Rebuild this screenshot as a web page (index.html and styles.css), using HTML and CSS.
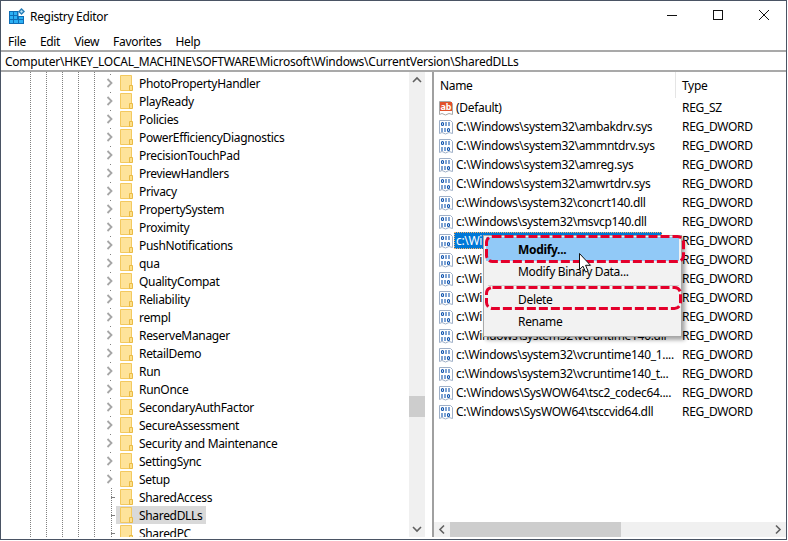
FILE: index.html
```html
<!DOCTYPE html>
<html lang="en">
<head>
<meta charset="utf-8">
<title>Registry Editor</title>
<link rel="stylesheet" href="styles.css">
</head>
<body>
<svg class="defs" width="0" height="0" aria-hidden="true">
  <symbol id="folder" viewBox="0 0 13 16">
    <path d="M.5.5H11.5V15.5H.5Z" fill="#fee39a" stroke="#f3c95f"/>
    <path d="M9.5 10.5H12.5V15.5H9.5Z" fill="#fde08a" stroke="#e9ba45"/>
  </symbol>
  <symbol id="chev" viewBox="0 0 8 10">
    <path d="M1.5 1L5.5 5 1.5 9" fill="none" stroke="#a6a6a6" stroke-width="1.8"/>
  </symbol>
  <symbol id="bin" viewBox="0 0 16 16">
    <path d="M1.5 1.5H12.5L14.5 3.5V14.5L11 13.5 7.5 15 4 13.5 1.5 14.5Z" fill="#fff" stroke="#9fb0c8"/>
    <g fill="none" stroke="#1458b0" stroke-width="1.1">
      <rect x="3.5" y="3.5" width="2" height="3" rx="1"/><path d="M8 3V7M11 3V7"/>
      <path d="M4 9V13M7 9V13"/><rect x="9.5" y="9.5" width="2" height="3" rx="1"/>
    </g>
  </symbol>
</svg>
<div class="window">
  <header class="titlebar">
    <svg class="appicon" width="16" height="16" viewBox="0 0 16 16" aria-hidden="true">
      <path d="M0 3H9.5V8H15V16H0Z" fill="#0f6db5"/>
      <g fill="#2cb0f4">
        <rect x="1" y="4" width="3" height="3"/><rect x="5" y="4" width="3" height="3"/>
        <rect x="1" y="8" width="3" height="3"/><rect x="5" y="8" width="3" height="3"/><rect x="10" y="9" width="4" height="2"/>
        <rect x="1" y="12" width="3" height="3"/><rect x="5" y="12" width="4" height="3"/><rect x="10" y="12" width="4" height="3"/>
      </g>
      <path d="M12.5 0L16 3.5 12.5 7 9 3.5Z" fill="#2a7fb8"/>
      <path d="M12.5 2L14 3.5 12.5 5 11 3.5Z" fill="#bfe3f7"/>
    </svg>
    <span class="title">Registry Editor</span>
    <div class="controls">
      <svg width="46" height="30" viewBox="0 0 46 30" aria-hidden="true"><path d="M18 14.5H28" stroke="#111"/></svg>
      <svg width="46" height="30" viewBox="0 0 46 30" aria-hidden="true"><rect x="18.5" y="9.5" width="9" height="9" fill="none" stroke="#111"/></svg>
      <svg width="46" height="30" viewBox="0 0 46 30" aria-hidden="true"><path d="M18 9L28 19M28 9L18 19" stroke="#111" fill="none"/></svg>
    </div>
  </header>
  <nav class="menubar"><span>File</span><span>Edit</span><span>View</span><span>Favorites</span><span>Help</span></nav>
  <div class="address">Computer\HKEY_LOCAL_MACHINE\SOFTWARE\Microsoft\Windows\CurrentVersion\SharedDLLs</div>
  <main class="panes">
    <section class="treepane">
      <div class="tree">
        <div class="node"><svg class="chev"><use href="#chev"/></svg><svg class="folder"><use href="#folder"/></svg><span class="label">PhotoPropertyHandler</span></div>
        <div class="node"><svg class="chev"><use href="#chev"/></svg><svg class="folder"><use href="#folder"/></svg><span class="label">PlayReady</span></div>
        <div class="node"><svg class="chev"><use href="#chev"/></svg><svg class="folder"><use href="#folder"/></svg><span class="label">Policies</span></div>
        <div class="node"><svg class="chev"><use href="#chev"/></svg><svg class="folder"><use href="#folder"/></svg><span class="label">PowerEfficiencyDiagnostics</span></div>
        <div class="node"><svg class="chev"><use href="#chev"/></svg><svg class="folder"><use href="#folder"/></svg><span class="label">PrecisionTouchPad</span></div>
        <div class="node"><svg class="chev"><use href="#chev"/></svg><svg class="folder"><use href="#folder"/></svg><span class="label">PreviewHandlers</span></div>
        <div class="node"><svg class="chev"><use href="#chev"/></svg><svg class="folder"><use href="#folder"/></svg><span class="label">Privacy</span></div>
        <div class="node"><svg class="chev"><use href="#chev"/></svg><svg class="folder"><use href="#folder"/></svg><span class="label">PropertySystem</span></div>
        <div class="node"><svg class="chev"><use href="#chev"/></svg><svg class="folder"><use href="#folder"/></svg><span class="label">Proximity</span></div>
        <div class="node"><svg class="chev"><use href="#chev"/></svg><svg class="folder"><use href="#folder"/></svg><span class="label">PushNotifications</span></div>
        <div class="node"><svg class="chev"><use href="#chev"/></svg><svg class="folder"><use href="#folder"/></svg><span class="label">qua</span></div>
        <div class="node"><svg class="chev"><use href="#chev"/></svg><svg class="folder"><use href="#folder"/></svg><span class="label">QualityCompat</span></div>
        <div class="node"><svg class="chev"><use href="#chev"/></svg><svg class="folder"><use href="#folder"/></svg><span class="label">Reliability</span></div>
        <div class="node"><svg class="chev"><use href="#chev"/></svg><svg class="folder"><use href="#folder"/></svg><span class="label">rempl</span></div>
        <div class="node"><svg class="chev"><use href="#chev"/></svg><svg class="folder"><use href="#folder"/></svg><span class="label">ReserveManager</span></div>
        <div class="node"><svg class="chev"><use href="#chev"/></svg><svg class="folder"><use href="#folder"/></svg><span class="label">RetailDemo</span></div>
        <div class="node"><svg class="chev"><use href="#chev"/></svg><svg class="folder"><use href="#folder"/></svg><span class="label">Run</span></div>
        <div class="node"><svg class="chev"><use href="#chev"/></svg><svg class="folder"><use href="#folder"/></svg><span class="label">RunOnce</span></div>
        <div class="node"><svg class="chev"><use href="#chev"/></svg><svg class="folder"><use href="#folder"/></svg><span class="label">SecondaryAuthFactor</span></div>
        <div class="node"><svg class="chev"><use href="#chev"/></svg><svg class="folder"><use href="#folder"/></svg><span class="label">SecureAssessment</span></div>
        <div class="node"><svg class="chev"><use href="#chev"/></svg><svg class="folder"><use href="#folder"/></svg><span class="label">Security and Maintenance</span></div>
        <div class="node"><svg class="chev"><use href="#chev"/></svg><svg class="folder"><use href="#folder"/></svg><span class="label">SettingSync</span></div>
        <div class="node"><svg class="chev"><use href="#chev"/></svg><svg class="folder"><use href="#folder"/></svg><span class="label">Setup</span></div>
        <div class="node leaf"><svg class="chev"></svg><svg class="folder"><use href="#folder"/></svg><span class="label">SharedAccess</span></div>
        <div class="node leaf selected"><svg class="chev"></svg><span class="sel"><svg class="folder"><use href="#folder"/></svg><span class="label">SharedDLLs</span></span></div>
        <div class="node leaf"><svg class="chev"></svg><svg class="folder"><use href="#folder"/></svg><span class="label">SharedPC</span></div>
      </div>
      <div class="vscroll">
        <svg class="arrow" width="16" height="16" viewBox="0 0 16 16" aria-hidden="true"><path d="M4 10L8 6 12 10" fill="none" stroke="#606060" stroke-width="1.6"/></svg>
        <div class="vtrack"><div class="vthumb"></div></div>
        <svg class="arrow" width="16" height="16" viewBox="0 0 16 16" aria-hidden="true"><path d="M4 6L8 10 12 6" fill="none" stroke="#606060" stroke-width="1.6"/></svg>
      </div>
    </section>
    <section class="listpane">
      <div class="list">
        <div class="cols head"><span class="cname">Name</span><span class="ctype">Type</span></div>
        <div class="cols row"><span class="cname">
          <svg class="vicon" width="16" height="16" viewBox="0 0 16 16" aria-hidden="true"><path d="M1.5 1.5H12.5L14.5 3.5V14.5L11 13.5 7.5 15 4 13.5 1.5 14.5Z" fill="#fff" stroke="#a8a8a8"/><rect x="2" y="2" width="12" height="9" fill="#e2502a"/><text x="8" y="9.5" class="abtext">ab</text></svg>
          <span class="vname">(Default)</span></span><span class="ctype">REG_SZ</span></div>
        <div class="cols row"><span class="cname"><svg class="vicon"><use href="#bin"/></svg><span class="vname">C:\Windows\system32\ambakdrv.sys</span></span><span class="ctype">REG_DWORD</span></div>
        <div class="cols row"><span class="cname"><svg class="vicon"><use href="#bin"/></svg><span class="vname">C:\Windows\system32\ammntdrv.sys</span></span><span class="ctype">REG_DWORD</span></div>
        <div class="cols row"><span class="cname"><svg class="vicon"><use href="#bin"/></svg><span class="vname">C:\Windows\system32\amreg.sys</span></span><span class="ctype">REG_DWORD</span></div>
        <div class="cols row"><span class="cname"><svg class="vicon"><use href="#bin"/></svg><span class="vname">C:\Windows\system32\amwrtdrv.sys</span></span><span class="ctype">REG_DWORD</span></div>
        <div class="cols row"><span class="cname"><svg class="vicon"><use href="#bin"/></svg><span class="vname">c:\Windows\system32\concrt140.dll</span></span><span class="ctype">REG_DWORD</span></div>
        <div class="cols row"><span class="cname"><svg class="vicon"><use href="#bin"/></svg><span class="vname">c:\Windows\system32\msvcp140.dll</span></span><span class="ctype">REG_DWORD</span></div>
        <div class="cols row"><span class="cname"><svg class="vicon"><use href="#bin"/></svg><span class="vname picked">c:\Wi</span></span><span class="ctype">REG_DWORD</span></div>
        <div class="cols row"><span class="cname"><svg class="vicon"><use href="#bin"/></svg><span class="vname">c:\Wi</span></span><span class="ctype">REG_DWORD</span></div>
        <div class="cols row"><span class="cname"><svg class="vicon"><use href="#bin"/></svg><span class="vname">c:\Wi</span></span><span class="ctype">REG_DWORD</span></div>
        <div class="cols row"><span class="cname"><svg class="vicon"><use href="#bin"/></svg><span class="vname">c:\Wi</span></span><span class="ctype">REG_DWORD</span></div>
        <div class="cols row"><span class="cname"><svg class="vicon"><use href="#bin"/></svg><span class="vname">c:\Wi</span></span><span class="ctype">REG_DWORD</span></div>
        <div class="cols row"><span class="cname"><svg class="vicon"><use href="#bin"/></svg><span class="vname">c:\Windows\system32\vcruntime140.dll</span></span><span class="ctype">REG_DWORD</span></div>
        <div class="cols row"><span class="cname"><svg class="vicon"><use href="#bin"/></svg><span class="vname">c:\Windows\system32\vcruntime140_1....</span></span><span class="ctype">REG_DWORD</span></div>
        <div class="cols row"><span class="cname"><svg class="vicon"><use href="#bin"/></svg><span class="vname">c:\Windows\system32\vcruntime140_t...</span></span><span class="ctype">REG_DWORD</span></div>
        <div class="cols row"><span class="cname"><svg class="vicon"><use href="#bin"/></svg><span class="vname">C:\Windows\SysWOW64\tsc2_codec64....</span></span><span class="ctype">REG_DWORD</span></div>
        <div class="cols row"><span class="cname"><svg class="vicon"><use href="#bin"/></svg><span class="vname">C:\Windows\SysWOW64\tsccvid64.dll</span></span><span class="ctype">REG_DWORD</span></div>
      </div>
      <div class="hscroll">
        <svg class="arrow" width="16" height="15" viewBox="0 0 16 15" aria-hidden="true"><path d="M10 3.5L6 7.5 10 11.5" fill="none" stroke="#606060" stroke-width="1.6"/></svg>
        <div class="htrack"><div class="hthumb"></div></div>
        <svg class="arrow" width="16" height="15" viewBox="0 0 16 15" aria-hidden="true"><path d="M6 3.5L10 7.5 6 11.5" fill="none" stroke="#606060" stroke-width="1.6"/></svg>
      </div>
    </section>
  </main>
</div>
<div class="ctxmenu">
  <div class="mi strong hot">Modify...</div>
  <div class="mi mi-binary">Modify Binary Data...</div>
  <div class="msep"></div>
  <div class="mi mi-delete">Delete</div>
  <div class="mi">Rename</div>
</div>
<svg class="marks" width="210" height="90" viewBox="0 0 210 90" aria-hidden="true">
  <rect x="1.5" y="1.5" width="197" height="25" rx="6"/>
  <rect x="1.5" y="52.5" width="194" height="21" rx="6"/>
</svg>
<svg class="cursor" width="13" height="20" viewBox="0 0 13 20" aria-hidden="true"><path d="M.5.5V16.5L4 13.2 6.5 19 9 18 6.6 12.3H11.5Z" fill="#fff" stroke="#111"/></svg>
</body>
</html>
```
FILE: styles.css
```css
* { box-sizing: border-box; }
html, body { margin: 0; padding: 0; }
body {
  width: 788px;
  height: 541px;
  overflow: hidden;
  background: #fff;
  font-family: "Noto Sans", "Open Sans", sans-serif;
  font-size: 12px;
  letter-spacing: -0.32px;
  color: #000;
  position: relative;
}
.defs { display: block; height: 0; }
.window {
  width: 787px;
  height: 540px;
  border: 1px solid #4a5464;
  background: #fff;
  display: flex;
  flex-direction: column;
}
.titlebar { height: 30px; display: flex; align-items: center; padding-left: 8px; flex: none; }
.appicon { flex: none; }
.title { margin-left: 5px; }
.controls { margin-left: auto; display: flex; margin-right: -1px; }
.menubar { height: 19px; display: flex; flex: none; align-items: center; padding: 1px 0 0 7px; gap: 14px; }
.address {
  height: 22px; flex: none; line-height: 19px; padding-left: 4px;
  border-top: 2px solid #a9a9a9; border-bottom: 2px solid #a9a9a9;
  white-space: nowrap; letter-spacing: -0.25px;
}
.panes { flex: 1; min-height: 0; display: flex; padding-bottom: 2px; }
.treepane { width: 425px; flex: none; display: flex; padding-left: 3px; padding-right: 1px; }
.tree {
  flex: 1; min-width: 0; overflow: hidden; padding-top: 2px;
  background-image:
    linear-gradient(#808080 50%, transparent 50%),
    linear-gradient(#808080 50%, transparent 50%),
    linear-gradient(#808080 50%, transparent 50%),
    linear-gradient(#808080 50%, transparent 50%),
    linear-gradient(#808080 50%, transparent 50%);
  background-size: 1px 2px;
  background-repeat: repeat-y;
  background-position: 26px 0, 42px 0, 58px 0, 74px 0, 90px 0;
}
.node {
  height: 18px; display: flex; align-items: center; padding-left: 102px; white-space: nowrap;
  background-image: linear-gradient(#808080, #808080);
  background-size: 1px 1px;
  background-repeat: no-repeat;
  background-position: 106px 0;
}
.leaf {
  background-image: linear-gradient(#808080 50%, transparent 50%), linear-gradient(90deg, #808080 50%, transparent 50%);
  background-size: 1px 2px, 8px 1px;
  background-repeat: repeat-y, no-repeat;
  background-position: 107px 0, 107px 9px;
}
.chev { width: 8px; height: 10px; flex: none; }
.folder { width: 13px; height: 16px; flex: none; margin-left: 6px; }
.label { margin-left: 6px; }
.sel { display: flex; align-items: center; height: 18px; background: #d9d9d9; padding: 0 3px 0 4px; margin-left: 2px; }
.sel .folder { margin-left: 0; }
.vscroll { width: 16px; flex: none; display: flex; flex-direction: column; background: #f0f0f0; }
.vtrack { flex: 1; padding-top: 308px; }
.vthumb { height: 21px; background: #cdcdcd; }
.arrow { flex: none; display: block; }
.listpane { flex: 1; min-width: 0; display: flex; flex-direction: column; margin-left: 6px; border-left: 2px solid #a0a0a0; }
.list { flex: 1; min-height: 0; }
.cols { display: flex; white-space: nowrap; }
.head { height: 26px; align-items: center; }
.head .cname { padding-left: 6px; }
.head .ctype { border-left: 1px solid #e5e5e5; padding-left: 6px; align-self: stretch; display: flex; align-items: center; }
.cname { width: 241px; flex: none; display: flex; align-items: center; overflow: hidden; }
.ctype { padding-left: 7px; }
.row { height: 19px; align-items: center; }
.row .cname { padding-left: 4px; }
.vicon { width: 16px; height: 16px; flex: none; }
.vname { padding: 0 2px; }
.picked { background: #0078d7; color: #fff; outline: 1px dotted #f7b267; outline-offset: -1px; width: 208px; }
.abtext { font: bold 9px "Noto Sans", sans-serif; fill: #fff; text-anchor: middle; letter-spacing: 0; }
.hscroll { height: 15px; flex: none; display: flex; background: #f0f0f0; }
.htrack { flex: 1; }
.hthumb { width: 171px; height: 100%; background: #cdcdcd; }
.ctxmenu {
  position: absolute; left: 483px; top: 235px; width: 199px; height: 102px;
  background: #f2f2f2; border: 1px solid #a8a8a8; padding: 1px 2px;
  box-shadow: 3px 3px 4px rgba(0,0,0,.35);
}
.mi { height: 22px; line-height: 22px; padding-left: 32px; }
.strong { font-weight: 700; }
.hot { background: #91c9f7; height: 24px; line-height: 25px; }
.mi-binary { height: 21px; line-height: 21px; }
.mi-delete { height: 23px; line-height: 24px; }
.msep { height: 1px; margin: 3px 0 2px 2px; background: #d0d0d0; }
.marks { position: absolute; left: 485px; top: 235px; }
.marks rect { fill: none; stroke: #e4002b; stroke-width: 3; stroke-dasharray: 9 3; }
.cursor { position: absolute; left: 579px; top: 253px; }
```
